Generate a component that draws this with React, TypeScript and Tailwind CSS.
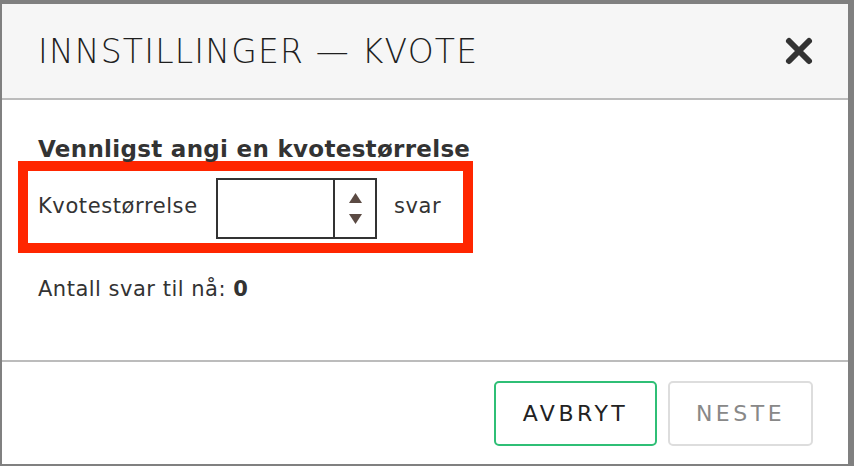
import React from 'react';

const font = { fontFamily: '"DejaVu Sans", Lato, Arial, sans-serif' };

function CloseIcon() {
  return (
    <svg width="30" height="30" viewBox="0 0 30 30" aria-hidden="true">
      <path d="M5 5 L25 25 M25 5 L5 25" stroke="#333333" strokeWidth="6" strokeLinecap="round" />
    </svg>
  );
}

function Stepper() {
  return (
    <div className="flex flex-col items-center justify-center gap-[11px] w-[42px] h-full border-l-2 border-[#333]">
      <svg width="13" height="10" viewBox="0 0 13 10">
        <path d="M6.5 0 L13 10 L0 10 Z" fill="#5b4a43" />
      </svg>
      <svg width="13" height="10" viewBox="0 0 13 10">
        <path d="M0 0 L13 0 L6.5 10 Z" fill="#5b4a43" />
      </svg>
    </div>
  );
}

export default function App() {
  return (
    <div
      className="w-[854px] h-[466px] bg-[#808080] pt-[4px] pl-[2px] pr-[6px] pb-[2px] overflow-hidden"
      style={font}
    >
      <div className="flex flex-col h-[460px] bg-white">
        {/* Header */}
        <div className="flex items-center justify-between h-[96px] bg-[#f6f6f6] border-b-2 border-[#bcbcbc] pl-[36px] pr-[34px]">
          <h1 className="text-[33px] font-light tracking-[1.2px] text-[#1f1f1f] pt-[2px]">INNSTILLINGER — KVOTE</h1>
          <button className="flex items-center justify-center">
            <CloseIcon />
          </button>
        </div>

        {/* Body */}
        <div className="flex-1 pl-[16px] pt-[37px]">
          <h2 className="pl-[20px] text-[23px] font-bold tracking-[0.3px] leading-[24px] text-[#333]">
            Vennligst angi en kvotestørrelse
          </h2>
          <div className="flex items-center w-[455px] h-[92px] border-[10px] border-[#ff2600] pl-[10px]">
            <span className="text-[21px] tracking-[0.6px] text-[#333] w-[178px]">Kvotestørrelse</span>
            <div className="flex h-[61px] w-[161px] border-2 border-[#333] mt-[3px]">
              <div className="flex-1" />
              <Stepper />
            </div>
            <span className="ml-[17px] text-[21px] tracking-[0.6px] text-[#333]">svar</span>
          </div>
          <p className="pl-[20px] mt-[21px] text-[21px] tracking-[0.5px] text-[#333]">
            Antall svar til nå: <span className="font-bold">0</span>
          </p>
        </div>

        {/* Footer */}
        <div className="flex items-center justify-end gap-[11px] h-[104px] border-t-2 border-[#bcbcbc] pr-[35px]">
          <button className="w-[163px] h-[65px] rounded-[5px] border-2 border-[#2fbf76] text-[22px] tracking-[3.5px] text-[#222]">
            AVBRYT
          </button>
          <button className="w-[145px] h-[65px] rounded-[5px] border-2 border-[#dddddd] text-[22px] tracking-[3.5px] text-[#888]">
            NESTE
          </button>
        </div>
      </div>
    </div>
  );
}
